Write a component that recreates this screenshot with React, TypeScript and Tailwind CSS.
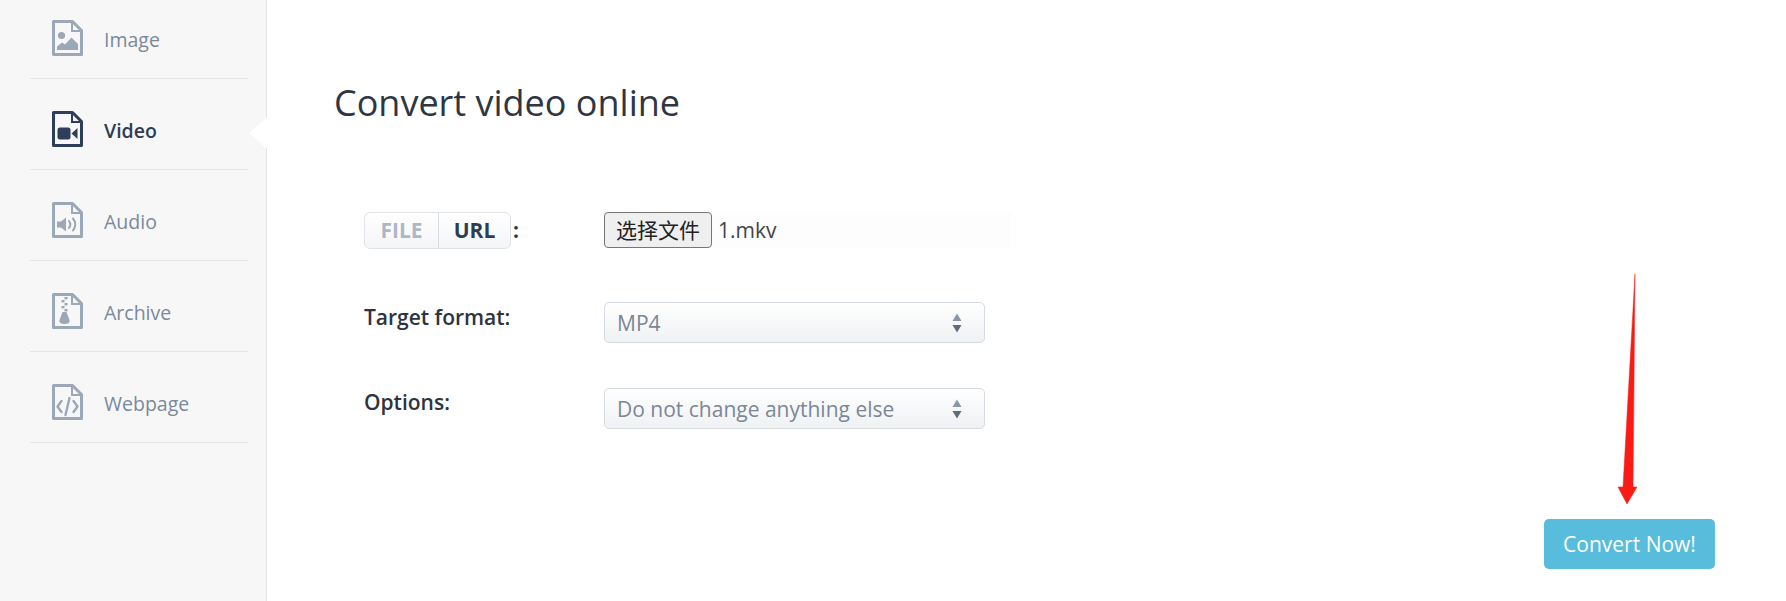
const font = { fontFamily: '"Open Sans", sans-serif' };

function FileIcon({ color, children }: { color: string; children: React.ReactNode }) {
  return (
    <svg width="31" height="36" viewBox="0 0 31 36" fill="none" className="mb-[4px] shrink-0">
      <path d="M1.5 1.5H20.5L29.5 10.5V34.5H1.5Z" stroke={color} strokeWidth="3" strokeLinejoin="round" />
      <path d="M20 1.5V11H29.5" stroke={color} strokeWidth="2" />
      <g fill={color} stroke="none">{children}</g>
    </svg>
  );
}

const items: { label: string; active?: boolean; icon: (c: string) => React.ReactNode }[] = [
  {
    label: 'Image',
    icon: () => (
      <>
        <circle cx="9.5" cy="15.5" r="3.6" />
        <path d="M5 30V26.5L10 22.5L13 24.5L19.5 17.5L26 24V30Z" />
      </>
    ),
  },
  {
    label: 'Video',
    active: true,
    icon: () => (
      <>
        <rect x="5.5" y="16.5" width="13" height="12" rx="2.5" />
        <path d="M19.5 22.5L25.5 17V28Z" />
      </>
    ),
  },
  {
    label: 'Audio',
    icon: (c) => (
      <>
        <path d="M5 19.5H9L14 15.5V29.5L9 25.5H5Z" />
        <path d="M17 19C18.5 21 18.5 24 17 26" stroke={c} strokeWidth="2" fill="none" strokeLinecap="round" />
        <path d="M21 16.5C24 20 24 25 21 28.5" stroke={c} strokeWidth="2" fill="none" strokeLinecap="round" />
      </>
    ),
  },
  {
    label: 'Archive',
    icon: () => (
      <>
        <rect x="12.5" y="4" width="3" height="2.4" />
        <rect x="9.5" y="7" width="3" height="2.4" />
        <rect x="12.5" y="10" width="3" height="2.4" />
        <rect x="9.5" y="13" width="3" height="2.4" />
        <rect x="12.5" y="16" width="3" height="2.4" />
        <path d="M10.5 19H14.5L17.5 27C18 30 16 31 12.5 31C9 31 7 30 7.5 27Z" />
      </>
    ),
  },
  {
    label: 'Webpage',
    icon: (c) => (
      <g stroke={c} strokeWidth="2.4" fill="none" strokeLinecap="round" strokeLinejoin="round">
        <path d="M9.5 17L5.5 22.5L9.5 28" />
        <path d="M21.5 17L25.5 22.5L21.5 28" />
        <path d="M17.5 14L13.5 31" />
      </g>
    ),
  },
];

function Stepper() {
  return (
    <svg width="10" height="20" viewBox="0 0 10 20" className="shrink-0">
      <path d="M5 0.5L9.5 8H0.5Z" fill="#8a97a6" />
      <path d="M5 19.5L9.5 12H0.5Z" fill="#5f6c7c" />
    </svg>
  );
}

function Select({ value }: { value: string }) {
  return (
    <div className="flex h-[41px] w-[381px] items-center justify-between rounded-[5px] border border-[#d5dbe1] bg-gradient-to-b from-white to-[#eff1f3] pl-[12px] pr-[22px] text-[21px] text-[#7b8796]">
      <span className="relative top-[1px]">{value}</span>
      <Stepper />
    </div>
  );
}

export default function App() {
  return (
    <div className="flex h-[601px] w-[1786px] overflow-hidden bg-white" style={font}>
      <aside className="relative w-[267px] shrink-0 border-r border-[#e2e4e7] bg-[#f7f7f8] pl-[30px] pr-[18px]">
        <nav className="-mt-[12px] flex flex-col">
          {items.map((it) => {
            const c = it.active ? '#2e3f5c' : '#9ba8b8';
            return (
              <div key={it.label} className="flex h-[91px] items-center gap-[21px] border-b border-[#e3e5e8] pl-[22px] pt-[13px]">
                <FileIcon color={c}>{it.icon(c)}</FileIcon>
                <span className={it.active ? 'text-[19.5px] font-semibold text-[#2f3d52]' : 'text-[19.5px] text-[#7a899c]'}>
                  {it.label}
                </span>
              </div>
            );
          })}
        </nav>
        <div className="absolute right-[-1px] top-[117px] h-0 w-0 border-y-[16px] border-r-[18px] border-y-transparent border-r-white" />
      </aside>

      <main className="relative flex min-w-0 flex-1 flex-col">
        <h1 className="ml-[67px] mt-[79px] text-[36px] leading-[48px] text-[#2f3641]">Convert video online</h1>

        <div className="ml-[97px] mt-[84px] grid grid-cols-[240px_1fr] items-start gap-y-[45px]">
          <div className="mb-[8px] mt-[1px] flex items-center">
            <div className="flex h-[37px] w-[147px] items-center rounded-[6px] border border-[#dfe3e8] bg-gradient-to-b from-white to-[#f4f5f7] text-[21px] font-bold">
              <span className="flex h-full w-[74px] items-center justify-center border-r border-[#d9dde2] text-[#acb8c6]">FILE</span>
              <span className="flex flex-1 items-center justify-center text-[#2f3d52]">URL</span>
            </div>
            <span className="ml-[2px] text-[21px] font-bold text-[#2d3440]">:</span>
          </div>
          <div className="flex h-[37px] w-[407px] items-center rounded-[3px] bg-[#fdfdfd]">
            <button
              className="flex h-[36px] w-[108px] items-center justify-center rounded-[4px] border border-[#767676] bg-[#efefef] text-[21px] text-[#222222]"
              style={{ fontFamily: '"Noto Sans CJK SC", sans-serif' }}
            >
              选择文件
            </button>
            <span className="relative top-[1px] ml-[6px] text-[21px] text-[#444444]">1.mkv</span>
          </div>

          <div className="pt-[1px] text-[21px] font-semibold leading-[28px] text-[#2d3440]">Target format:</div>
          <Select value="MP4" />

          <div className="text-[21px] font-semibold leading-[28px] text-[#2d3440]">Options:</div>
          <Select value="Do not change anything else" />
        </div>

        <div className="mr-[71px] mt-[90px] flex justify-end">
          <button className="h-[50px] w-[171px] rounded-[5px] bg-[#58bcdc] pt-[2px] text-[21px] text-white">Convert Now!</button>
        </div>

        <svg className="absolute left-[1348px] top-[270px]" width="24" height="238" viewBox="0 0 24 238" aria-hidden="true">
          <path d="M20 4L18 217H22L12 234L3 217H8Z" fill="#fa1c14" stroke="#fa1c14" strokeWidth="0.5" />
        </svg>
      </main>
    </div>
  );
}
